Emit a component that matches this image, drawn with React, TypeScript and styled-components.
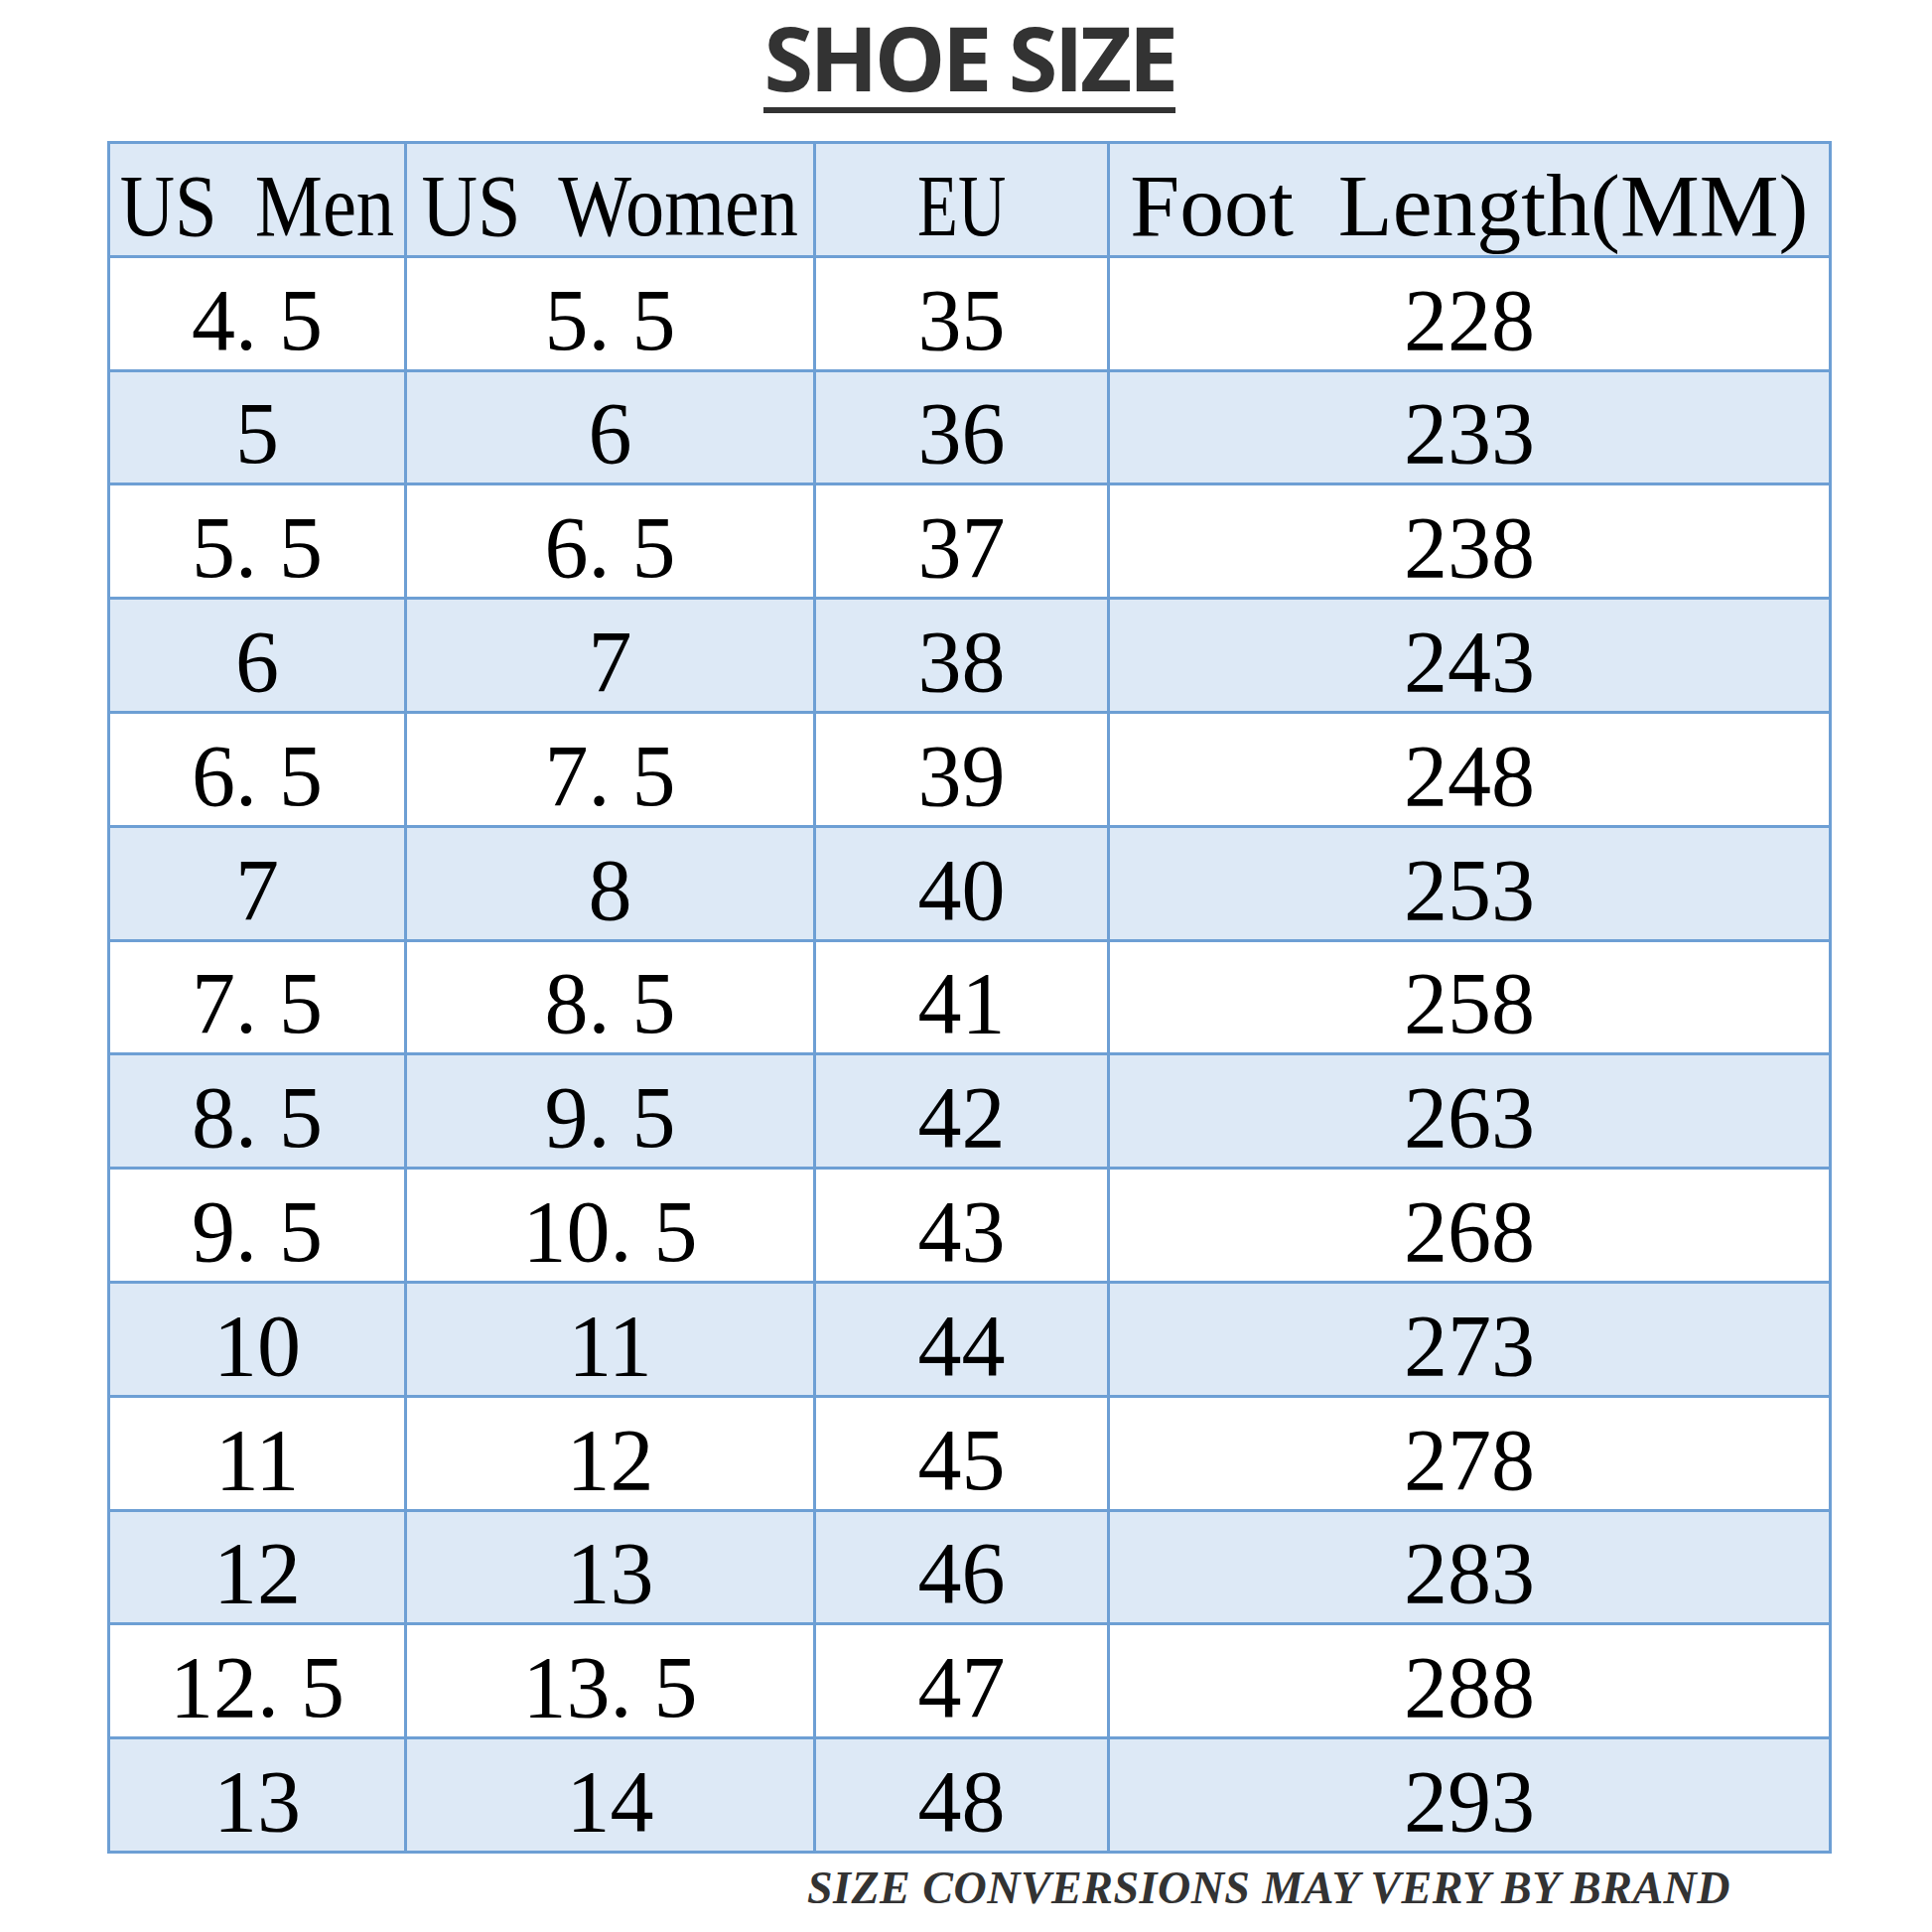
import styled, { createGlobalStyle } from "styled-components";

type SizeRow = {
  men: string;
  women: string;
  eu: string;
  length: string;
};

const rows: SizeRow[] = [
  { men: "4. 5", women: "5. 5", eu: "35", length: "228" },
  { men: "5", women: "6", eu: "36", length: "233" },
  { men: "5. 5", women: "6. 5", eu: "37", length: "238" },
  { men: "6", women: "7", eu: "38", length: "243" },
  { men: "6. 5", women: "7. 5", eu: "39", length: "248" },
  { men: "7", women: "8", eu: "40", length: "253" },
  { men: "7. 5", women: "8. 5", eu: "41", length: "258" },
  { men: "8. 5", women: "9. 5", eu: "42", length: "263" },
  { men: "9. 5", women: "10. 5", eu: "43", length: "268" },
  { men: "10", women: "11", eu: "44", length: "273" },
  { men: "11", women: "12", eu: "45", length: "278" },
  { men: "12", women: "13", eu: "46", length: "283" },
  { men: "12. 5", women: "13. 5", eu: "47", length: "288" },
  { men: "13", women: "14", eu: "48", length: "293" },
];

const headers = [
  { label: "US  Men", scale: 0.87 },
  { label: "US  Women", scale: 0.89 },
  { label: "EU", scale: 0.76 },
  { label: "Foot  Length(MM)", scale: 1.02 },
];

const GlobalStyle = createGlobalStyle`
  html, body {
    margin: 0;
    padding: 0;
    background: #ffffff;
  }
`;

const Page = styled.div`
  width: 1946px;
  height: 1946px;
  box-sizing: border-box;
  padding: 8px 0 0 108px;
  display: flex;
  flex-direction: column;
  background: #ffffff;
`;

const TitleBar = styled.div`
  width: 1737px;
  display: flex;
  justify-content: center;
`;

const Title = styled.h1`
  margin: 0;
  padding-bottom: 1px;
  border-bottom: 6px solid #333333;
  font-family: "Open Sans", "Liberation Sans", sans-serif;
  font-weight: 700;
  font-size: 90px;
  line-height: 1.1;
  letter-spacing: -3.5px;
  color: #333333;
`;

const Grid = styled.div`
  margin-top: 28px;
  display: grid;
  grid-template-columns: 299px 412px 296px 727px;
  grid-auto-rows: 114.8px;
  width: 1737px;
  box-sizing: border-box;
  border-top: 3px solid #6d9fd4;
  border-left: 3px solid #6d9fd4;
`;

const Cell = styled.div<{ $shaded: boolean }>`
  display: flex;
  align-items: center;
  justify-content: center;
  padding-top: 14px;
  box-sizing: border-box;
  border-right: 3px solid #6d9fd4;
  border-bottom: 3px solid #6d9fd4;
  background: ${({ $shaded }) => ($shaded ? "#dde9f6" : "#ffffff")};
  font-family: "Liberation Serif", "Times New Roman", serif;
  font-size: 88px;
  line-height: 1;
  color: #000000;
  white-space: pre;
  overflow: hidden;
`;

const HeaderLabel = styled.span<{ $scale: number }>`
  display: inline-block;
  transform: scaleX(${({ $scale }) => $scale});
  white-space: pre;
`;

const Note = styled.p`
  margin: 10px 0 0 705px;
  font-family: "Liberation Serif", "Times New Roman", serif;
  font-style: italic;
  font-weight: 700;
  font-size: 46px;
  line-height: 1.1;
  letter-spacing: 0.5px;
  color: #333333;
  white-space: nowrap;
`;

function App() {
  return (
    <>
      <GlobalStyle />
      <Page>
        <TitleBar>
          <Title>SHOE SIZE</Title>
        </TitleBar>
        <Grid>
          {headers.map((h) => (
            <Cell key={h.label} $shaded>
              <HeaderLabel $scale={h.scale}>{h.label}</HeaderLabel>
            </Cell>
          ))}
          {rows.map((row, i) => {
            const shaded = i % 2 === 1;
            return [row.men, row.women, row.eu, row.length].map((value, j) => (
              <Cell key={`${i}-${j}`} $shaded={shaded}>
                {value}
              </Cell>
            ));
          })}
        </Grid>
        <Note>SIZE CONVERSIONS MAY VERY BY BRAND</Note>
      </Page>
    </>
  );
}

export default App;
